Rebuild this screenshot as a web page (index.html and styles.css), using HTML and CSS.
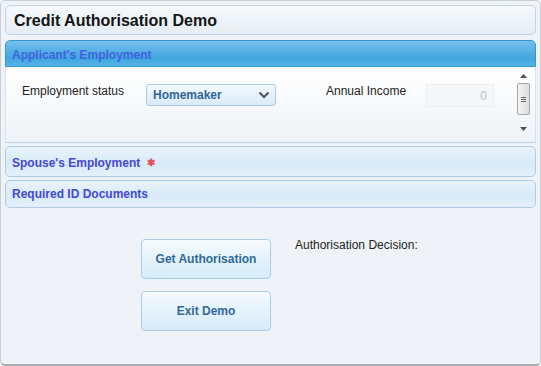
FILE: index.html
```html
<!DOCTYPE html>
<html>
<head>
<meta charset="utf-8">
<link rel="stylesheet" href="styles.css">
</head>
<body>
<div class="frame">
  <div class="title">Credit Authorisation Demo</div>
  <div class="section open">
    <div class="hdr-active">Applicant's Employment</div>
    <div class="panel">
      <div class="fields">
        <span class="lbl lbl-status">Employment status</span>
        <div class="select"><span>Homemaker</span>
          <svg class="chev" width="12" height="8" viewBox="0 0 12 8"><path d="M1.5 1.5 L6 6 L10.5 1.5" fill="none" stroke="#4a5560" stroke-width="2"/></svg>
        </div>
        <span class="lbl lbl-income">Annual Income</span>
        <div class="input">0</div>
      </div>
      <div class="scrollbar">
        <svg class="arr" width="7" height="4" viewBox="0 0 7 4"><path d="M0 4 L3.5 0 L7 4Z" fill="#505050"/></svg>
        <div class="thumb"><span></span><span></span><span></span></div>
        <svg class="arr down" width="7" height="4" viewBox="0 0 7 4"><path d="M0 0 L3.5 4 L7 0Z" fill="#505050"/></svg>
      </div>
    </div>
  </div>
  <div class="hdr spouse">Spouse's Employment <span class="req">✱</span></div>
  <div class="hdr docs">Required ID Documents</div>
  <div class="actions">
    <div class="buttons">
      <div class="btn">Get Authorisation</div>
      <div class="btn">Exit Demo</div>
    </div>
    <div class="decision">Authorisation Decision:</div>
  </div>
</div>
</body>
</html>
```

FILE: styles.css
```css
* { box-sizing: border-box; }
html, body { margin: 0; padding: 0; background: #ffffff; }
body { font-family: Arial, "Liberation Sans", sans-serif; }

.frame {
  width: 541px;
  height: 366px;
  border: 1px solid #c9ced3;
  border-bottom: 2px solid #a9aeb3;
  border-radius: 5px;
  background: #eff3f7;
  padding: 4px 4px 0 4px;
  display: flex;
  flex-direction: column;
}

.title {
  height: 30px;
  border: 1px solid #bcd4e8;
  border-radius: 5px;
  background: linear-gradient(#f6f9fc, #e4edf5);
  font-size: 16px;
  font-weight: bold;
  color: #141414;
  padding: 6px 0 0 8px;
  line-height: 18px;
}

.section.open { margin-top: 5px; }

.hdr-active {
  height: 27px;
  border: 1px solid #3a95cf;
  border-radius: 5px 5px 0 0;
  background: linear-gradient(#74c0ec 0%, #5bb3e6 35%, #3fa6df 70%, #55b3e7 100%);
  color: #4161de;
  font-size: 12px;
  font-weight: bold;
  padding: 7px 0 0 6px;
  line-height: 14px;
}

.panel {
  height: 76px;
  border: 1px solid #d4e3ef;
  border-top: none;
  border-bottom: 1px solid #b9d1e4;
  background: linear-gradient(#ffffff, #eef3f7);
  display: flex;
  justify-content: space-between;
}

.fields {
  display: flex;
  align-items: flex-start;
  padding: 16px 0 0 16px;
}

.lbl {
  font-size: 12px;
  color: #222;
  line-height: 14px;
}
.lbl-status { width: 124px; margin-top: 1px; }
.lbl-income { width: 100px; margin-left: 50px; margin-top: 1px; }

.select {
  width: 130px;
  height: 22px;
  border: 1px solid #a9cbe5;
  border-radius: 3px;
  background: linear-gradient(#f3f9fd, #d9eaf8);
  display: flex;
  align-items: center;
  justify-content: space-between;
  padding: 0 5px 0 6px;
  margin-top: 1px;
  font-size: 12px;
  font-weight: bold;
  color: #2d6696;
}
.chev { display: block; }

.input {
  width: 68px;
  height: 23px;
  border: 1px solid #eceef0;
  background: #f6f7f8;
  color: #b9bcbf;
  font-size: 12px;
  text-align: right;
  padding: 4px 6px 0 0;
  margin-top: 1px;
}

.scrollbar {
  width: 15px;
  margin-right: 4px;
  display: flex;
  flex-direction: column;
  align-items: center;
  padding-top: 7px;
}
.arr { display: block; }
.thumb {
  margin-top: 5px;
  width: 13px;
  height: 32px;
  border: 1px solid #a8a8a8;
  border-radius: 2px;
  background: linear-gradient(90deg, #f4f4f4, #dedede);
  display: flex;
  flex-direction: column;
  align-items: center;
  justify-content: center;
  gap: 1px;
}
.thumb span { display: block; width: 5px; height: 1px; background: #666; }
.arr.down { margin-top: 12px; }

.hdr {
  border: 1px solid #aecbe2;
  border-radius: 5px;
  background: linear-gradient(#e8f3fb 0%, #d8ebf8 55%, #e4f0fa 100%);
  color: #4448d4;
  font-size: 12px;
  font-weight: bold;
  padding: 0 0 0 6px;
  display: flex;
  align-items: center;
}
.spouse { height: 31px; margin-top: 3px; padding-top: 2px; }
.docs { height: 28px; margin-top: 3px; }
.req { color: #e0505a; font-size: 10px; margin-left: 7px; }

.actions {
  display: flex;
  align-items: flex-start;
  padding: 31px 0 0 136px;
}
.buttons {
  display: flex;
  flex-direction: column;
  gap: 12px;
}
.btn {
  width: 130px;
  height: 40px;
  border: 1px solid #aacde6;
  border-radius: 4px;
  background: linear-gradient(#f6fbfe 0%, #e4f2fc 50%, #d6ebf9 100%);
  color: #2f6a98;
  font-size: 12px;
  font-weight: bold;
  display: flex;
  align-items: center;
  justify-content: center;
}
.decision {
  margin-left: 24px;
  font-size: 12px;
  color: #222;
  line-height: 14px;
  margin-top: -1px;
}
```
